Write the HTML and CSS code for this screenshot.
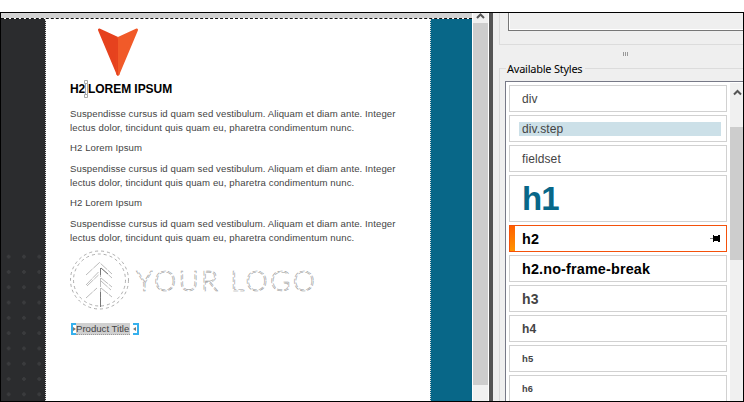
FILE: index.html
```html
<!DOCTYPE html>
<html lang="en">
<head>
<meta charset="utf-8">
<title>Style editor</title>
<link rel="stylesheet" href="styles.css">
</head>
<body>
<div class="window">
  <main class="editor">
    <div class="canvas">
      <div class="band"></div>
      <div class="spread">
        <div class="margin-left"><div class="dots"></div></div>
        <article class="page">
          <svg class="marker" width="42" height="48" viewBox="0 0 42 48"><path d="M2.5 2 21 10.5V46Z" fill="#e6421e" stroke="#e6421e" stroke-width="3" stroke-linejoin="round"/><path d="M39.500 2 21 10.500V46Z" fill="#f15a29" stroke="#f15a29" stroke-width="3" stroke-linejoin="round"/><path d="M19 9.600 21 10.500V47.500Q20 47.500 19.500 46Z" fill="#e6421e"/></svg>
          <h2 class="heading"><span>H2</span><svg class="caret" width="5" height="18" viewBox="0 0 5 18"><path d="M.5 .5h3v3h-3zM.5 14.500h3v3h-3zM1.500 3.500v11M3.500 3.500v11" fill="none" stroke="#aaa"/></svg><span>LOREM IPSUM</span></h2>
          <p class="para"><span class="first">Suspendisse cursus id quam sed vestibulum. Aliquam et diam ante. Integer</span><span class="second">lectus dolor, tincidunt quis quam eu, pharetra condimentum nunc.</span></p>
          <p class="sub">H2 Lorem Ipsum</p>
          <p class="para"><span class="first">Suspendisse cursus id quam sed vestibulum. Aliquam et diam ante. Integer</span><span class="second">lectus dolor, tincidunt quis quam eu, pharetra condimentum nunc.</span></p>
          <p class="sub">H2 Lorem Ipsum</p>
          <p class="para"><span class="first">Suspendisse cursus id quam sed vestibulum. Aliquam et diam ante. Integer</span><span class="second">lectus dolor, tincidunt quis quam eu, pharetra condimentum nunc.</span></p>
          <svg class="logo" width="250" height="60" viewBox="0 0 250 60" fill="none">
            <g stroke="#999" stroke-width=".8" stroke-dasharray="3 3"><circle cx="29.500" cy="30" r="29"/><circle cx="29.500" cy="30" r="26"/></g>
            <g stroke="#aaa" stroke-width=".8"><path d="M16 25 29.500 12.500 42 24M30.500 18v40M17 36 28.500 25M16 35 28.500 22M31 28l11 9M31 18l11 10M31 31l10 9M16 48l11-10M31 38l11 9" stroke-dasharray="9 1"/><path d="M30.500 18v7M30.500 42v15M31 18l7 6" stroke="#666"/></g>
            <text x="66" y="41" textLength="179" lengthAdjust="spacing" class="wordmark">YOUR LOGO</text>
          </svg>
          <div class="title-tag"><i class="bracket open"></i><span>Product Title</span><i class="bracket close"></i></div>
        </article>
        <div class="margin-right"></div>
      </div>
    </div>
    <div class="scroll doc-scroll"><svg width="15" height="10" viewBox="0 0 15 10"><path d="M4 5 7.500 1.500 11 5" fill="none" stroke="#555" stroke-width="2"/></svg><div class="thumb"></div></div>
  </main>
  <div class="divider"></div>
  <aside class="panel">
    <div class="upper"><div class="upper-box"></div></div>
    <div class="grip"><i></i><i></i><i></i></div>
    <section class="group">
      <h3 class="legend">Available Styles</h3>
      <div class="list">
        <ul class="items">
          <li>div</li>
          <li class="step"><span>div.step</span></li>
          <li>fieldset</li>
          <li class="h1">h1</li>
          <li class="h2 selected">h2<svg class="pin" width="11" height="8" viewBox="0 0 11 8"><path d="M0 3h4v1H0z" fill="#888"/><path d="M3 0h1v1h4V0h2v7H8V6H4v1H3z" fill="#000"/></svg></li>
          <li class="h2">h2.no-frame-break</li>
          <li class="h3">h3</li>
          <li class="h4">h4</li>
          <li class="h5">h5</li>
          <li class="h6">h6</li>
        </ul>
        <div class="scroll list-scroll"><svg width="13" height="44" viewBox="0 0 13 44"><path d="M4 11.500 7.500 8 11 11.500" fill="none" stroke="#555" stroke-width="2"/></svg><div class="thumb"></div></div>
      </div>
    </section>
  </aside>
</div>
</body>
</html>
```

FILE: styles.css
```css
* { box-sizing: border-box; }
html, body { margin: 0; }
body { width: 744px; height: 402px; padding-top: 12px; overflow: hidden; background: #fff; font-family: "Liberation Sans", Arial, sans-serif; }
.window { height: 390px; border: 1px solid #000; display: flex; overflow: hidden; background: #efefef; }
.editor { display: flex; width: 488px; background: #fff; }
.canvas { width: 471px; display: flex; flex-direction: column; }
.band { height: 5px; flex: none; background: #d2d2d2; }
.spread { flex: 1; min-height: 0; display: flex; border-top: 1px dashed #111; }
.margin-left { width: 45px; background: #2b2c2e; border-right: 1px dotted #ddd; padding-top: 230px; }
.dots { height: 152px; background: radial-gradient(circle, #3a3b3d 1.5px, transparent 2px) 0 0 / 15.3px 15.3px; }
.page { width: 384px; height: 382px; background: #fff; padding: 9px 0 0 24px; color: #444; display: flex; flex-direction: column; align-items: flex-start; }
.margin-right { flex: 1; background: #086788; border-left: 1px dotted #ddd; }
.marker { flex: none; margin-left: 27px; }
.heading { margin: 4px 0 0; height: 18px; display: flex; align-items: center; font-size: 12px; line-height: 18px; color: #000; white-space: nowrap; letter-spacing: -.05px; }
.caret { margin: 0 -1px 0 -1px; flex: none; }
.heading span:first-child { width: 15px; }
.para, .sub { margin: 0; font-size: 9.6px; white-space: nowrap; letter-spacing: .085px; }
.para { margin-top: 8px; height: 27px; }
.heading + .para { margin-top: 9px; }
.para span { display: block; height: 13.5px; line-height: 14px; }
.second { letter-spacing: .11px; }
.sub { height: 13px; line-height: 13px; margin-top: 7px; }
.logo { margin-top: 6px; flex: none; }
.wordmark { font-family: Lato, sans-serif; font-size: 28px; font-weight: 300; fill: #fff; stroke: #999; stroke-width: .6px; stroke-dasharray: 5 2; }
.title-tag { margin: 13px 0 0 1px; height: 12px; display: flex; font-size: 9.6px; line-height: 12px; color: #444; white-space: nowrap; }
.title-tag span { width: 54px; background: #d0d0d0; border-bottom: 1px dotted #999; }
.bracket { width: 6px; height: 12px; border: 2px solid #36b0ed; display: flex; align-items: center; }
.open { border-right: 0; width: 5px; }
.close { border-left: 0; margin-left: 3px; }
.bracket::after { content: ""; border: 2.5px solid transparent; }
.open::after { border-left: 3px solid #777; border-right: 0; }
.close::after { border-right: 3px solid #777; border-left: 0; }
.scroll { background: #f0f0f0; display: flex; flex-direction: column; }
.scroll svg { display: block; flex: none; }
.thumb { background: #cdcdcd; }
.doc-scroll { width: 15px; margin: 0 1px; }
.doc-scroll .thumb { height: 362px; }
.divider { width: 4px; background: #555; }
.panel { flex: 1; min-width: 0; padding-left: 6px; display: flex; flex-direction: column; }
.upper { height: 32px; flex: none; border: solid #dcdcdc; border-width: 0 0 1px 1px; padding-left: 8px; }
.upper-box { height: 18px; border: solid #777; border-width: 0 0 1px 1px; box-shadow: inset 1px -1px #fff; }
.grip { height: 23px; flex: none; display: flex; gap: 1px; padding: 7px 0 0 124px; }
.grip i { width: 1px; height: 4px; background: #999; }
.group { flex: 1; min-height: 0; border: solid #dcdcdc; border-width: 1px 0 0 1px; padding-left: 5px; display: flex; flex-direction: column; }
.legend { flex: none; align-self: flex-start; width: 79px; height: 13px; margin: -7px 0 0 1px; padding-left: 1px; background: #efefef; color: #000; font: 11px/14px "Noto Sans", sans-serif; letter-spacing: -.24px; white-space: nowrap; }
.list { flex: 1; min-height: 0; margin-top: 6px; background: #fff; border: solid #777987; border-width: 1px 0 0 1px; display: flex; }
.items { list-style: none; margin: 0; padding: 3px; width: 224px; display: flex; flex-direction: column; gap: 3px; }
.items li { position: relative; flex: none; height: 27px; border: 1px solid #d1d1d1; padding: 0 5px 0 12px; display: flex; align-items: center; font-size: 12px; letter-spacing: .1px; color: #444; white-space: nowrap; }
.items .step { padding-left: 9px; }
.step span { flex: 1; height: 14px; line-height: 14px; padding-left: 3px; background: #cce0e8; }
.items .h1 { height: 47px; font-size: 33px; letter-spacing: -1px; font-weight: bold; color: #086788; }
.items .h2 { font-size: 14.4px; letter-spacing: .15px; font-weight: bold; color: #000; }
.items .selected { border-color: #f4510b; justify-content: space-between; }
.selected::before { content: ""; position: absolute; left: 0; top: 0; bottom: 0; width: 5px; background: linear-gradient(#ff6000, #ff9400); }
.items .h3 { font-size: 14px; font-weight: bold; }
.items .h4 { font-size: 12px; font-weight: bold; }
.items .h5, .items .h6 { font-size: 9.5px; font-weight: bold; }
.items .h6 { font-size: 9.2px; }
.list-scroll { flex: 1; margin-top: 1px; }
.list-scroll .thumb { height: 133px; }
```
